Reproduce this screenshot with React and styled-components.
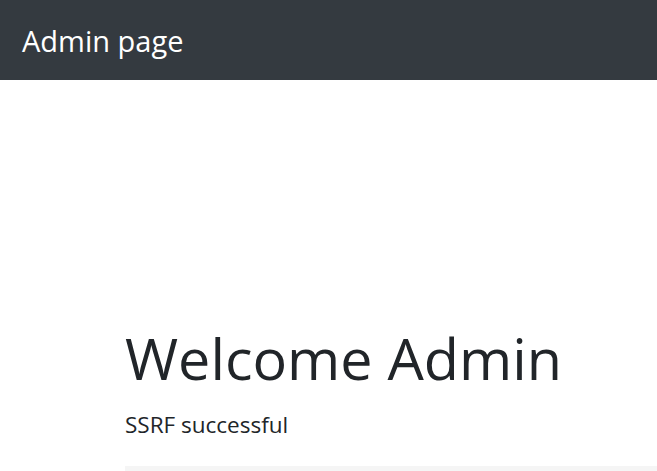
import React from 'react';
import styled, { createGlobalStyle } from 'styled-components';

const GlobalStyle = createGlobalStyle`
  html, body {
    margin: 0;
    padding: 0;
    background: #fff;
    overflow: hidden;
  }
  body {
    font-family: 'Open Sans', 'Noto Sans', sans-serif;
    color: #212529;
  }
`;

const Navbar = styled.nav`
  display: flex;
  align-items: center;
  height: 80px;
  padding: 0 0 0 22px;
  background-color: #343a40;
`;

const Brand = styled.a`
  color: #fff;
  font-size: 29px;
  line-height: 1;
  text-decoration: none;
  margin-top: 1px;
`;

const Main = styled.main`
  padding: 244px 0 0 125px;
`;

const Title = styled.h1`
  margin: 0;
  font-size: 57.5px;
  font-weight: 400;
  line-height: 1.2;
`;

const Lead = styled.p`
  margin: 15px 0 0;
  font-size: 22.5px;
  line-height: 1.5;
`;

const Output = styled.pre`
  margin: 24px 0 0;
  height: 7px;
  background-color: #f5f5f5;
`;

export default function App() {
  return (
    <>
      <GlobalStyle />
      <Navbar>
        <Brand href="#">Admin page</Brand>
      </Navbar>
      <Main>
        <Title>Welcome Admin</Title>
        <Lead>SSRF successful</Lead>
        <Output />
      </Main>
    </>
  );
}
